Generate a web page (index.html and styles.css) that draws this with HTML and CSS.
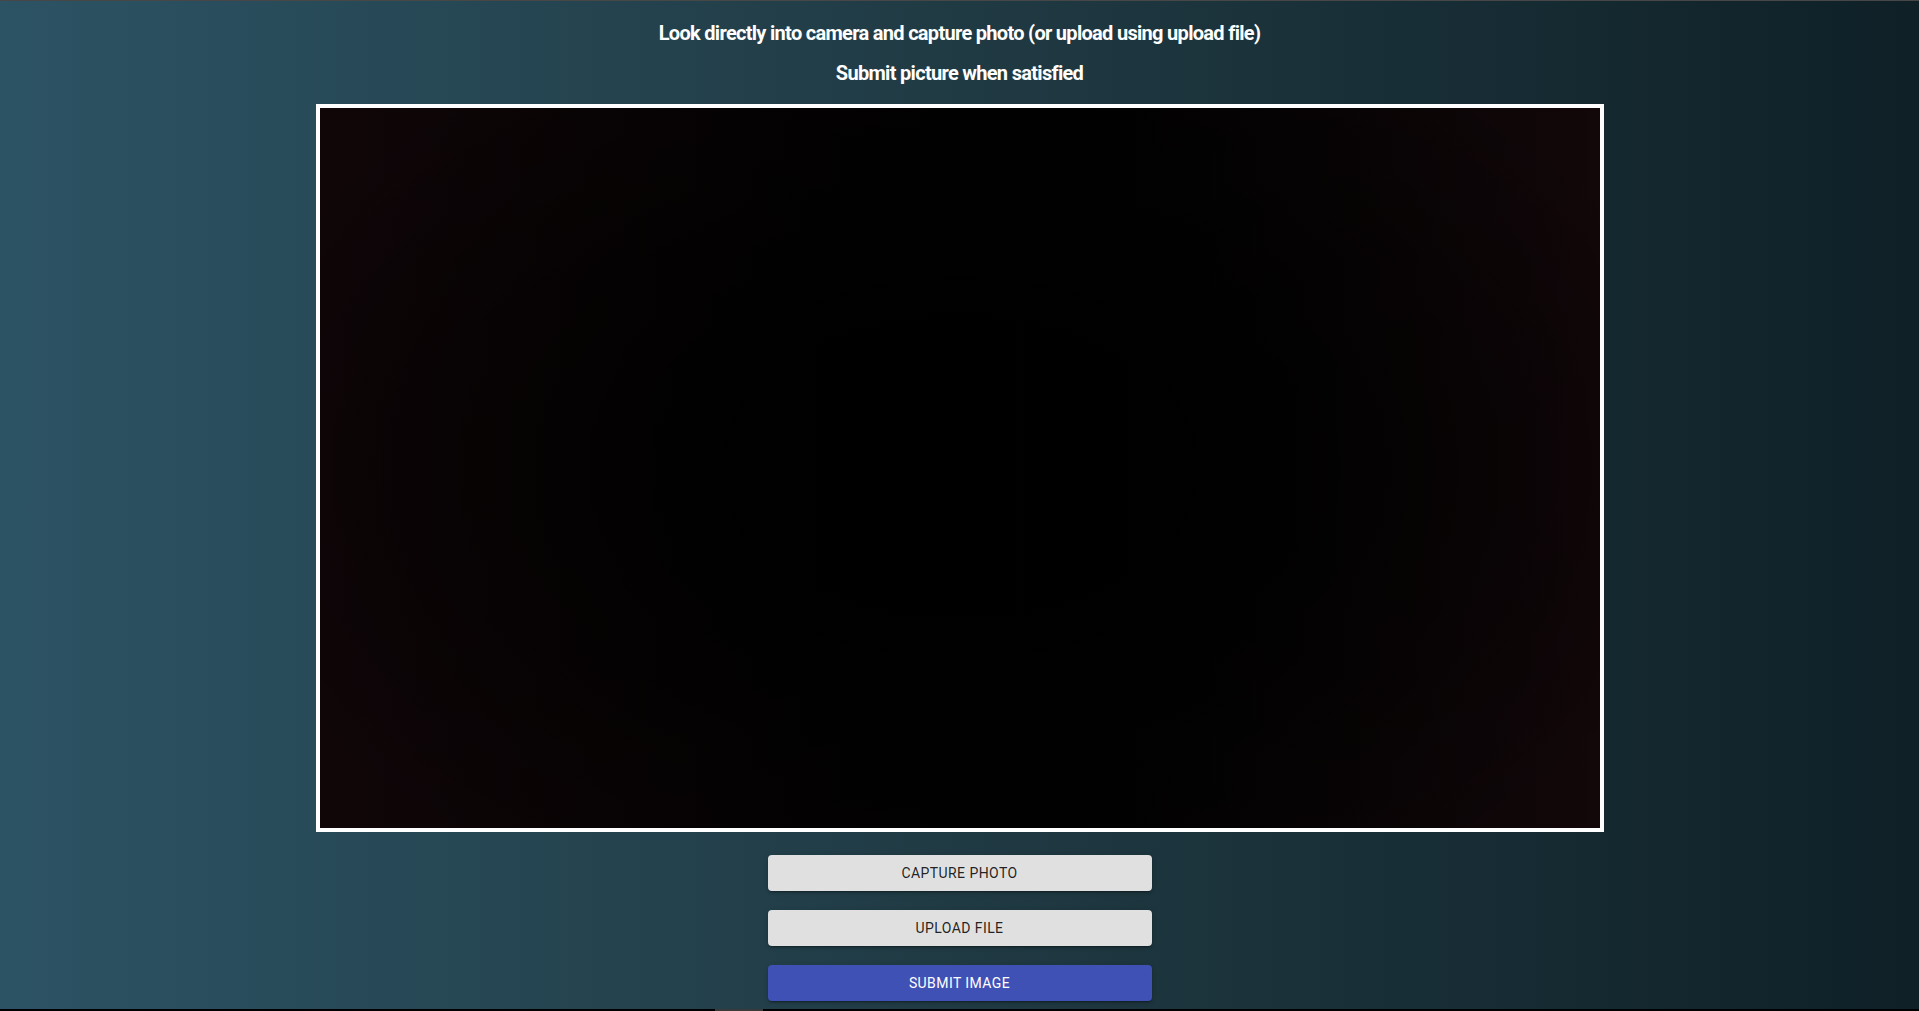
FILE: index.html
```html
<!DOCTYPE html>
<html lang="en">
<head>
<meta charset="utf-8">
<title>Capture photo</title>
<link rel="stylesheet" href="styles.css">
</head>
<body>
<div class="page">
  <div class="topline"></div>
  <main class="content">
    <div class="instructions">
      <p class="line">Look directly into camera and capture photo (or upload using upload file)</p>
      <p class="line">Submit picture when satisfied</p>
    </div>
    <div class="frame">
      <div class="video"></div>
    </div>
    <div class="actions">
      <button class="btn btn-grey" type="button">Capture photo</button>
      <button class="btn btn-grey" type="button">Upload file</button>
      <button class="btn btn-primary" type="button">Submit image</button>
    </div>
  </main>
  <div class="scrollbar"><div class="thumb"></div></div>
</div>
</body>
</html>
```
FILE: styles.css
```css
html, body {
  margin: 0;
  padding: 0;
  height: 100%;
  overflow: hidden;
}

body {
  font-family: Roboto, "Liberation Sans", sans-serif;
  background: linear-gradient(to right, #2c5364, #203a43, #0f2027);
  color: #fff;
}

.page {
  height: 1011px;
  display: flex;
  flex-direction: column;
}

.topline {
  height: 1px;
  background: #474747;
  flex: none;
}

.content {
  flex: 1;
  display: flex;
  flex-direction: column;
  align-items: center;
  padding-top: 12px;
}

.instructions {
  display: flex;
  flex-direction: column;
  align-items: center;
}

.line {
  margin: 0;
  font-size: 20px;
  font-weight: 700;
  line-height: 40px;
  letter-spacing: -0.7px;
  white-space: nowrap;
  text-align: center;
}

.frame {
  margin-top: 11px;
  border: 4px solid #fff;
  width: 1280px;
  height: 720px;
  background: #000;
}

.video {
  width: 100%;
  height: 100%;
  background:
    radial-gradient(ellipse 60% 70% at 50% 50%, rgba(0,0,0,0.85) 30%, rgba(0,0,0,0) 100%),
    linear-gradient(to right, #100608 0%, #0a0405 22%, #040203 42%, #020202 60%, #080405 78%, #120709 100%);
}

.actions {
  margin-top: 23px;
  display: flex;
  flex-direction: column;
  gap: 19px;
}

.btn {
  width: 384px;
  height: 36px;
  border: none;
  border-radius: 4px;
  font-family: Roboto, "Liberation Sans", sans-serif;
  font-size: 14px;
  font-weight: 400;
  letter-spacing: 0.03em;
  text-transform: uppercase;
  cursor: pointer;
  box-shadow: 0 3px 1px -2px rgba(0,0,0,0.2), 0 2px 2px 0 rgba(0,0,0,0.14), 0 1px 5px 0 rgba(0,0,0,0.12);
}

.btn-grey {
  background: #e0e0e0;
  color: rgba(0,0,0,0.87);
}

.btn-primary {
  background: #3f51b5;
  color: #fff;
}

.scrollbar {
  height: 2px;
  background: #000;
  flex: none;
  display: flex;
}

.thumb {
  margin-left: 715px;
  width: 48px;
  background: #3a3a3a;
}
```
